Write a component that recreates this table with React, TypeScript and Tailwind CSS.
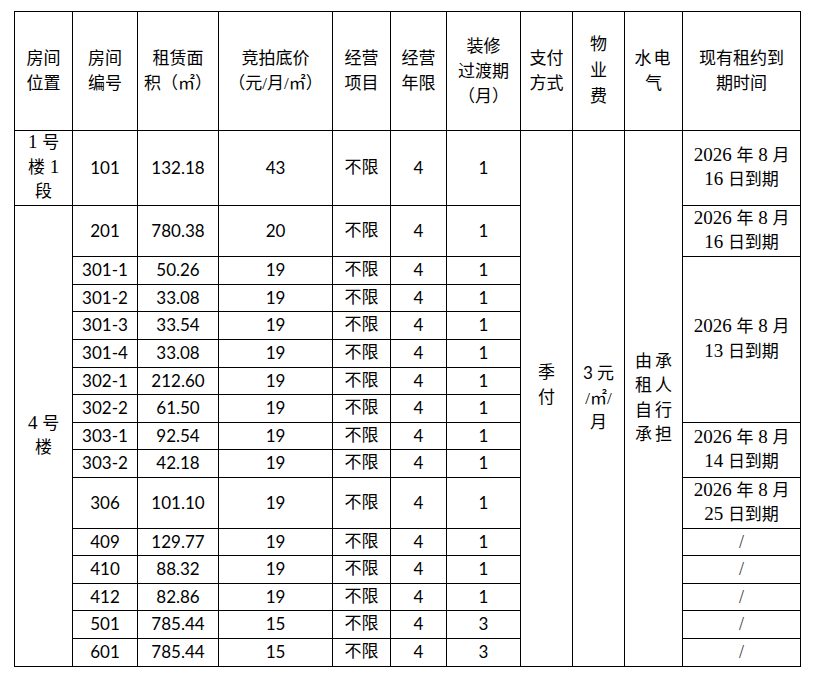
import React from "react";

const cjk = "font-['Liberation_Serif','Noto_Sans_CJK_SC',serif]";
const num = "font-['Lato','Noto_Sans_CJK_SC',sans-serif]";
const td = "border border-black p-0 text-center align-middle";

type Row = {
  no: string;
  area: string;
  price: string;
  trans: string;
  h: string;
  date?: { lines: string[]; span: number } | "slash";
};

const rows: Row[] = [
  { no: "201", area: "780.38", price: "20", trans: "1", h: "h-[51px]", date: { lines: ["2026 年 8 月", "16 日到期"], span: 1 } },
  { no: "301-1", area: "50.26", price: "19", trans: "1", h: "h-[28px]", date: { lines: ["2026 年 8 月", "13 日到期"], span: 6 } },
  { no: "301-2", area: "33.08", price: "19", trans: "1", h: "h-[27px]" },
  { no: "301-3", area: "33.54", price: "19", trans: "1", h: "h-[28px]" },
  { no: "301-4", area: "33.08", price: "19", trans: "1", h: "h-[28px]" },
  { no: "302-1", area: "212.60", price: "19", trans: "1", h: "h-[27px]" },
  { no: "302-2", area: "61.50", price: "19", trans: "1", h: "h-[28px]" },
  { no: "303-1", area: "92.54", price: "19", trans: "1", h: "h-[27px]", date: { lines: ["2026 年 8 月", "14 日到期"], span: 2 } },
  { no: "303-2", area: "42.18", price: "19", trans: "1", h: "h-[28px]" },
  { no: "306", area: "101.10", price: "19", trans: "1", h: "h-[51px]", date: { lines: ["2026 年 8 月", "25 日到期"], span: 1 } },
  { no: "409", area: "129.77", price: "19", trans: "1", h: "h-[27px]", date: "slash" },
  { no: "410", area: "88.32", price: "19", trans: "1", h: "h-[28px]", date: "slash" },
  { no: "412", area: "82.86", price: "19", trans: "1", h: "h-[27px]", date: "slash" },
  { no: "501", area: "785.44", price: "15", trans: "3", h: "h-[28px]", date: "slash" },
  { no: "601", area: "785.44", price: "15", trans: "3", h: "h-[28px]", date: "slash" },
];

function Txt({ t }: { t: string }) {
  const parts = t.split(/([0-9 ]+)/);
  return (
    <>
      {parts.map((p, i) =>
        /[0-9 ]/.test(p) && p !== "" ? (
          <span key={i} className="text-[19px] leading-none whitespace-pre">{p}</span>
        ) : (
          <span key={i}>{p}</span>
        )
      )}
    </>
  );
}

function Lines({ lines, serifNum }: { lines: string[]; serifNum?: boolean }) {
  return (
    <>
      {lines.map((l, i) => (
        <div key={i}>{serifNum ? <Txt t={l} /> : l}</div>
      ))}
    </>
  );
}

export default function App() {
  return (
    <div className="w-[815px] h-[683px] bg-white pt-[11px] pl-[14px] text-black">
      <table className="table-fixed border-collapse w-[787px] text-[17px] leading-[24.5px]">
        <colgroup>
          <col className="w-[58px]" />
          <col className="w-[65px]" />
          <col className="w-[81px]" />
          <col className="w-[114px]" />
          <col className="w-[58px]" />
          <col className="w-[56px]" />
          <col className="w-[74px]" />
          <col className="w-[52px]" />
          <col className="w-[52px]" />
          <col className="w-[58px]" />
          <col className="w-[118px]" />
        </colgroup>
        <tbody>
          <tr className="h-[119px]">
            <td className={`${td} ${cjk} leading-[25px]`}><Lines lines={["房间", "位置"]} /></td>
            <td className={`${td} ${cjk} leading-[25px]`}><Lines lines={["房间", "编号"]} /></td>
            <td className={`${td} ${cjk} leading-[25px]`}><Lines lines={["租赁面", "积（㎡）"]} /></td>
            <td className={`${td} ${cjk} leading-[25px]`}><Lines lines={["竞拍底价", "（元/月/㎡）"]} /></td>
            <td className={`${td} ${cjk} leading-[25px]`}><Lines lines={["经营", "项目"]} /></td>
            <td className={`${td} ${cjk} leading-[25px]`}><Lines lines={["经营", "年限"]} /></td>
            <td className={`${td} ${cjk} leading-[25px]`}><Lines lines={["装修", "过渡期", "（月）"]} /></td>
            <td className={`${td} ${cjk} leading-[25px]`}><Lines lines={["支付", "方式"]} /></td>
            <td className={`${td} ${cjk} leading-[26px]`}><Lines lines={["物", "业", "费"]} /></td>
            <td className={`${td} ${cjk} leading-[25px]`}>
              <div className="tracking-[2px]">水电</div>
              <div>气</div>
            </td>
            <td className={`${td} ${cjk} leading-[25px]`}><Lines lines={["现有租约到", "期时间"]} /></td>
          </tr>
          <tr className="h-[75px]">
            <td className={`${td} ${cjk}`}><Lines serifNum lines={["1 号", "楼 1", "段"]} /></td>
            <td className={`${td} ${num}`}>101</td>
            <td className={`${td} ${num}`}>132.18</td>
            <td className={`${td} ${num}`}>43</td>
            <td className={`${td} ${cjk}`}>不限</td>
            <td className={`${td} ${num}`}>4</td>
            <td className={`${td} ${num}`}>1</td>
            <td rowSpan={17} className={`${td} ${cjk} pb-[26px]`}><Lines lines={["季", "付"]} /></td>
            <td rowSpan={17} className={`${td} ${cjk}`}>
              <div><span className={num}>3</span> 元</div>
              <div>/㎡/</div>
              <div>月</div>
            </td>
            <td rowSpan={17} className={`${td} ${cjk}`}>
              <div className="tracking-[3px] pl-[3px]">由承</div>
              <div className="tracking-[3px] pl-[3px]">租人</div>
              <div className="tracking-[3px] pl-[3px]">自行</div>
              <div className="tracking-[3px] pl-[3px]">承担</div>
            </td>
            <td className={`${td} ${cjk}`}><Lines serifNum lines={["2026 年 8 月", "16 日到期"]} /></td>
          </tr>
          {rows.map((r, i) => (
            <tr key={r.no} className={r.h}>
              {i === 0 && (
                <td rowSpan={16} className={`${td} ${cjk}`}><Lines serifNum lines={["4 号", "楼"]} /></td>
              )}
              <td className={`${td} ${num}`}>{r.no}</td>
              <td className={`${td} ${num}`}>{r.area}</td>
              <td className={`${td} ${num}`}>{r.price}</td>
              <td className={`${td} ${cjk}`}>不限</td>
              <td className={`${td} ${num}`}>4</td>
              <td className={`${td} ${num}`}>{r.trans}</td>
              {r.date === "slash" ? (
                <td className={`${td} ${cjk} text-[18px] text-[#333]`}>/</td>
              ) : r.date ? (
                <td rowSpan={r.date.span} className={`${td} ${cjk}`}><Lines serifNum lines={r.date.lines} /></td>
              ) : null}
            </tr>
          ))}
        </tbody>
      </table>
    </div>
  );
}
